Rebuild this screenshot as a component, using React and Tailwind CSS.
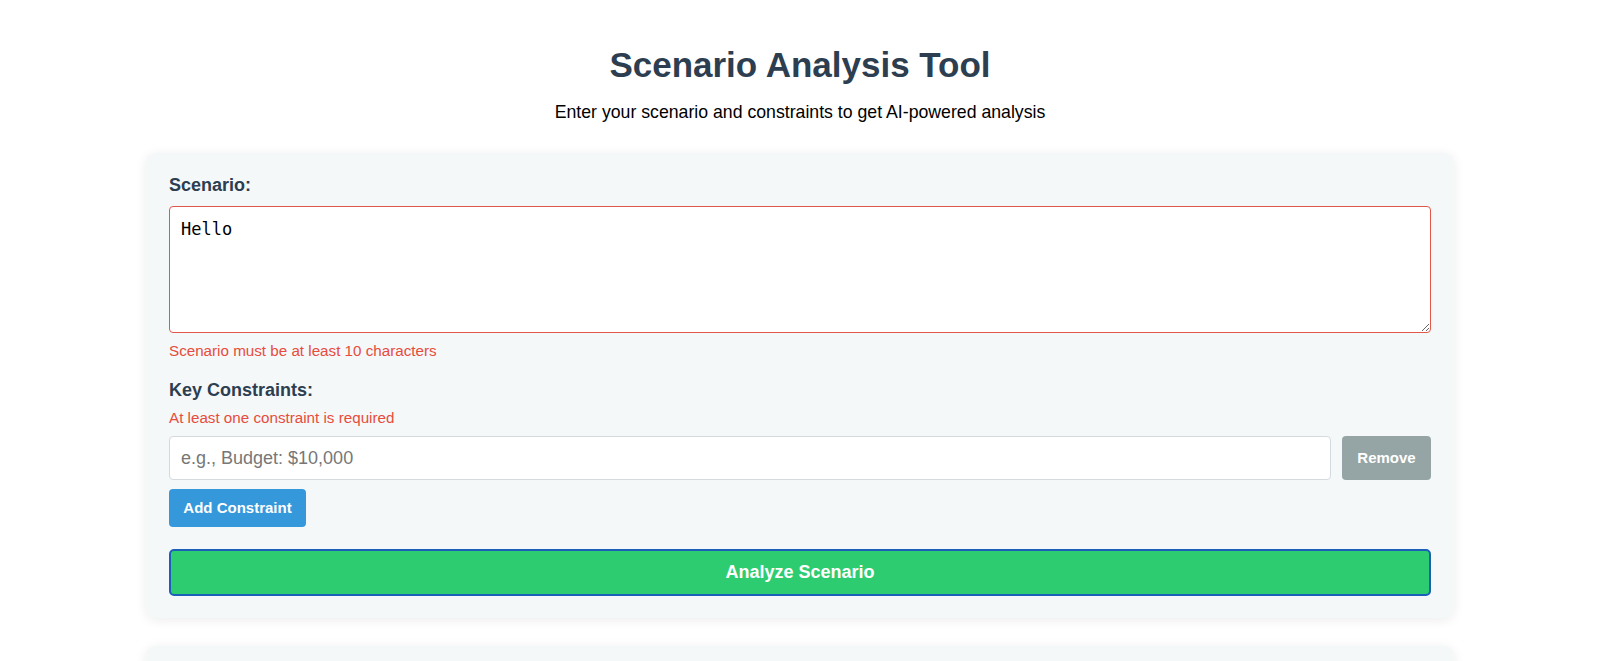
import React, { useState } from "react";

const sans = { fontFamily: '"Liberation Sans", Arial, sans-serif' };

const ScenarioForm = () => {
  const [scenario, setScenario] = useState("Hello");
  const [constraints, setConstraints] = useState([""]);

  return (
    <div className="w-[1308px] mx-auto bg-[#f5f8f9] rounded-[10px] shadow-[0_2px_12px_rgba(0,0,0,0.08)] px-[23px] pt-[19px] pb-[22px]">
      <label className="block text-[18px] leading-[27px] font-bold text-[#2c3e50] mb-[7px]">
        Scenario:
      </label>
      <textarea
        value={scenario}
        onChange={(e) => setScenario(e.target.value)}
        className="block w-full h-[127px] bg-white border border-[#e2574c] rounded-[4px] px-[11px] py-[10px] text-[17px] leading-[24px] text-black outline-none"
        style={{ fontFamily: '"DejaVu Sans Mono", monospace' }}
      />
      <div className="mt-[7px] text-[15.2px] leading-[22px] text-[#e74c3c]">
        Scenario must be at least 10 characters
      </div>

      <div className="mt-[15px] text-[18px] leading-[27px] font-bold text-[#2c3e50]">
        Key Constraints:
      </div>
      <div className="mt-[3px] text-[15.2px] leading-[22px] text-[#e74c3c]">
        At least one constraint is required
      </div>

      {constraints.map((c, i) => (
        <div key={i} className="flex gap-[11px] mt-[7px]">
          <input
            value={c}
            onChange={(e) => {
              const next = [...constraints];
              next[i] = e.target.value;
              setConstraints(next);
            }}
            placeholder="e.g., Budget: $10,000"
            className="flex-1 h-[44px] bg-white border border-[#d5dadf] rounded-[4px] px-[11px] text-[18px] text-black placeholder:text-[#777] outline-none"
            style={sans}
          />
          <button className="w-[89px] h-[44px] bg-[#95a5a6] text-white font-bold text-[15px] rounded-[4px]">
            Remove
          </button>
        </div>
      ))}

      <button
        onClick={() => setConstraints([...constraints, ""])}
        className="mt-[9px] w-[137px] h-[38px] bg-[#3498db] text-white font-bold text-[15px] rounded-[4px]"
      >
        Add Constraint
      </button>

      <button className="mt-[22px] block w-full h-[47px] bg-[#2ecc71] border-2 border-[#1b5fb8] rounded-[5px] text-white font-bold text-[18px]">
        Analyze Scenario
      </button>
    </div>
  );
};

export default function App() {
  return (
    <div className="min-h-screen bg-white pt-[44px]" style={sans}>
      <h1 className="text-center text-[35px] leading-[42px] font-bold text-[#2c3e50]">
        Scenario Analysis Tool
      </h1>
      <p className="mt-[13px] text-center text-[17.7px] leading-[27px] text-black">
        Enter your scenario and constraints to get AI-powered analysis
      </p>

      <div className="mt-[27px]">
        <ScenarioForm />
      </div>

      {/* results card, mostly below the fold */}
      <div className="w-[1308px] mx-auto mt-[28px] h-[200px] bg-[#f5f8f9] rounded-[10px] shadow-[0_2px_12px_rgba(0,0,0,0.08)]" />
    </div>
  );
}
